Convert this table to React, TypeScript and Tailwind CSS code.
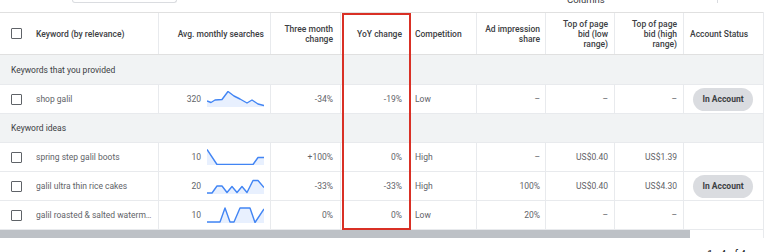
import React from 'react';

type Row = {
  keyword: string;
  searches: string;
  spark: number[][];
  three: string;
  yoy: string;
  competition: string;
  share: string;
  low: string;
  high: string;
  inAccount: boolean;
};

const cols =
  'grid grid-cols-[159px_112px_70px_70px_66px_69px_69px_69px_80px]';

const rowsProvided: Row[] = [
  {
    keyword: 'shop galil',
    searches: '320',
    spark: [
      [0, 10], [4, 11.5], [8, 9], [15, 8.5], [21, 0.5], [27, 5], [33, 8],
      [40, 12], [45, 9], [51, 13], [57, 14.5],
    ],
    three: '-34%',
    yoy: '-19%',
    competition: 'Low',
    share: '–',
    low: '–',
    high: '–',
    inAccount: true,
  },
];

const rowsIdeas: Row[] = [
  {
    keyword: 'spring step galil boots',
    searches: '10',
    spark: [[0, 0.5], [10, 15.5], [46, 15.5], [51, 8.5], [57, 8.5]],
    three: '+100%',
    yoy: '0%',
    competition: 'High',
    share: '–',
    low: 'US$0.40',
    high: 'US$1.39',
    inAccount: false,
  },
  {
    keyword: 'galil ultra thin rice cakes',
    searches: '20',
    spark: [
      [0, 15], [5, 15], [10, 8], [15, 8], [20, 14.5], [25, 8.5], [30, 14.5],
      [35, 8.5], [40, 14.5], [46, 2.5], [51, 2.5], [57, 9.5],
    ],
    three: '-33%',
    yoy: '-33%',
    competition: 'High',
    share: '100%',
    low: 'US$0.40',
    high: 'US$4.30',
    inAccount: true,
  },
  {
    keyword: 'galil roasted & salted watermelon seeds',
    searches: '10',
    spark: [
      [0, 15], [13, 15], [18, 1], [23, 15], [27, 15], [33, 1], [43, 1],
      [48, 15.5], [57, 2],
    ],
    three: '0%',
    yoy: '0%',
    competition: 'Low',
    share: '20%',
    low: '–',
    high: '–',
    inAccount: false,
  },
];

const Checkbox = () => (
  <div className="ml-[11px] w-[11px] h-[11px] shrink-0 border-[1.5px] border-[#5f6368] rounded-[1px]" />
);

const Sparkline = ({ points }: { points: number[][] }) => {
  const line = points.map((p) => p.join(',')).join(' ');
  const area = `0,16 ${line} 57,16`;
  return (
    <svg width="57" height="16" viewBox="0 0 57 16" className="shrink-0">
      <polygon points={area} fill="#e8f0fe" />
      <polyline
        points={line}
        fill="none"
        stroke="#4285f4"
        strokeWidth="1.4"
        strokeLinejoin="round"
      />
    </svg>
  );
};

const DataRow = ({ row }: { row: Row }) => (
  <div className={`${cols} h-[29px] border-b border-[#e8eaed] bg-white text-[#5f6368]`}>
    <div className="flex items-center border-r border-[#e8eaed] min-w-0">
      <Checkbox />
      <span className="ml-[14px] pr-[6px] truncate">{row.keyword}</span>
    </div>
    <div className="flex items-center justify-end gap-[6px] pr-[6px] border-r border-[#e8eaed]">
      <span>{row.searches}</span>
      <Sparkline points={row.spark} />
    </div>
    <div className="flex items-center justify-end pr-[7px] border-r border-[#e8eaed]">
      {row.three}
    </div>
    <div className="flex items-center justify-end pr-[8px] border-r border-[#e8eaed]">
      {row.yoy}
    </div>
    <div className="flex items-center pl-[4px] border-r border-[#e8eaed]">
      {row.competition}
    </div>
    <div className="flex items-center justify-end pr-[5px] border-r border-[#e8eaed]">
      {row.share}
    </div>
    <div className="flex items-center justify-end pr-[6px] border-r border-[#e8eaed]">
      {row.low}
    </div>
    <div className="flex items-center justify-end pr-[6px] border-r border-[#e8eaed]">
      {row.high}
    </div>
    <div className="flex items-center pl-[9px]">
      {row.inAccount && (
        <span className="flex items-center justify-center w-[60px] h-[23px] rounded-full bg-[#dadce0] font-bold text-[#3c4043]">
          In Account
        </span>
      )}
    </div>
  </div>
);

const GroupRow = ({ label, h }: { label: string; h: string }) => (
  <div className={`flex items-center ${h} pl-[11px] bg-[#f1f3f4] border-b border-[#e8eaed] text-[#3c4043]`}>
    {label}
  </div>
);

export default function App() {
  return (
    <div className="w-[768px] h-[252px] overflow-hidden bg-white font-[Roboto,Arial,sans-serif] text-[8.5px] leading-[10px]">
      <div className="flex items-start h-[12px]">
        <div className="ml-[72px] w-[105px] h-[3px] border border-t-0 border-[#dadce0] rounded-b-[6px]" />
        <span className="ml-[390px] w-[150px] -mt-[5px] text-[9.5px] text-[#3c4043]">Columns</span>
        <div className="w-px h-[3px] bg-[#dadce0]" />
      </div>

      <div className="relative w-[764px] border-r border-[#e8eaed]">
        <div className={`${cols} h-[43px] border-y border-[#e0e0e0] font-medium text-[#3c4043]`}>
          <div className="flex items-center border-r border-[#e8eaed]">
            <Checkbox />
            <span className="ml-[14px]">Keyword (by relevance)</span>
          </div>
          <div className="flex items-center justify-end pr-[6px] border-r border-[#e8eaed]">
            Avg. monthly searches
          </div>
          <div className="flex items-center justify-end text-right pr-[7px] border-r border-[#e8eaed]">
            Three month
            <br />
            change
          </div>
          <div className="flex items-center justify-end pr-[8px] border-r border-[#e8eaed]">
            YoY change
          </div>
          <div className="flex items-center pl-[4px] border-r border-[#e8eaed]">
            Competition
          </div>
          <div className="flex items-center justify-end text-right pr-[5px] border-r border-[#e8eaed]">
            Ad impression
            <br />
            share
          </div>
          <div className="flex items-center justify-end text-right pr-[6px] border-r border-[#e8eaed]">
            Top of page
            <br />
            bid (low
            <br />
            range)
          </div>
          <div className="flex items-center justify-end text-right pr-[6px] border-r border-[#e8eaed]">
            Top of page
            <br />
            bid (high
            <br />
            range)
          </div>
          <div className="flex items-center pl-[6px]">Account Status</div>
        </div>

        <GroupRow label="Keywords that you provided" h="h-[30px]" />
        {rowsProvided.map((r) => (
          <DataRow key={r.keyword} row={r} />
        ))}
        <GroupRow label="Keyword ideas" h="h-[29px]" />
        {rowsIdeas.map((r) => (
          <DataRow key={r.keyword} row={r} />
        ))}

        <div className="h-[8px] w-[690px] bg-[#bdc1c6]" />

        {/* highlight drawn over the YoY column */}
        <div className="absolute left-[342px] top-px w-[69px] h-[217px] border-2 border-[#d93025]" />
      </div>

      <div className="flex justify-end pr-[22px] pt-[12px] text-[10px] text-[#202124]">
        <span>1 - 4 of 4</span>
      </div>
    </div>
  );
}
